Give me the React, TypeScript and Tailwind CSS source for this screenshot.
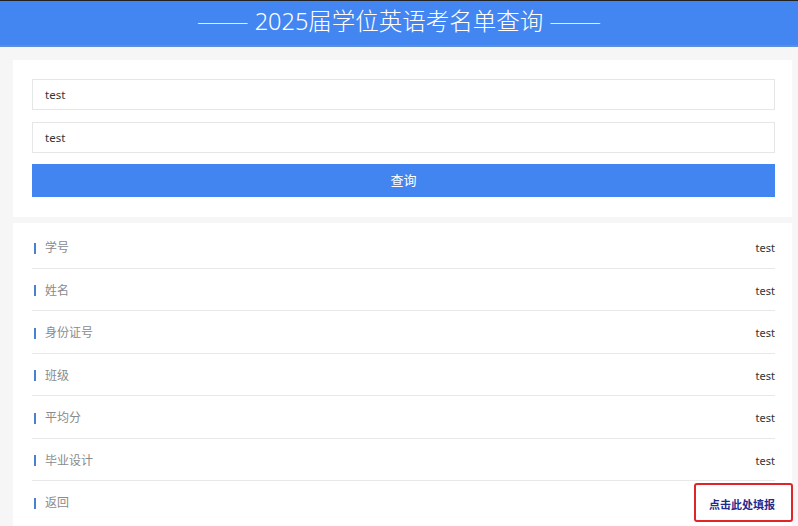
import React from "react";

const rows = [
  { label: "学号", value: "test" },
  { label: "姓名", value: "test" },
  { label: "身份证号", value: "test" },
  { label: "班级", value: "test" },
  { label: "平均分", value: "test" },
  { label: "毕业设计", value: "test" },
];

const font = { fontFamily: '"Noto Sans", "Noto Sans CJK SC", sans-serif' };

export default function App() {
  return (
    <div className="min-h-[526px] w-[798px] bg-[#f6f6f6] overflow-hidden" style={font}>
      {/* header */}
      <div className="border-t border-[#222] bg-[#4386f2] h-[47px] border-b-2 border-b-[#5d8fd8] flex items-center justify-center pb-[3px]">
        <h1 className="text-white text-[23.5px] font-light leading-none whitespace-nowrap">
          <span className="inline-block ml-[12px] origin-right scale-x-[1.35] font-['Noto_Sans_CJK_SC'] font-thin">——</span> 2025届学位英语考名单查询{" "}
          <span className="inline-block mr-[12px] origin-left scale-x-[1.35] font-['Noto_Sans_CJK_SC'] font-thin">——</span>
        </h1>
      </div>

      {/* search card */}
      <div className="mt-[13px] ml-[13px] mr-[6px] bg-white pl-[19px] pr-[17px] pt-[19px] pb-[20px]">
        <div className="h-[31px] border border-[#e6e6e6] flex items-center pl-[12px] text-[11.5px] text-[#333]">test</div>
        <div className="mt-[12px] h-[31px] border border-[#e6e6e6] flex items-center pl-[12px] text-[11.5px] text-[#333]">test</div>
        <button className="mt-[11px] w-full h-[33px] bg-[#4285f0] text-white text-[13px] flex items-center justify-center">查询</button>
      </div>

      {/* result card */}
      <div className="mt-[6px] ml-[13px] mr-[6px] bg-white pl-[19px] pr-[17px] pt-[3px] pb-[3px]">
        {rows.map((r) => (
          <div key={r.label} className="h-[42.5px] border-b border-[#e8e8e8] flex items-center justify-between pt-[3px]">
            <div className="flex items-center">
              <span className="ml-[2px] w-[2px] h-[11px] bg-[#4a80d2]" />
              <span className="ml-[9px] text-[12px] text-[#8a8a8a]">{r.label}</span>
            </div>
            <span className="text-[11px] text-[#333]">{r.value}</span>
          </div>
        ))}
        <div className="h-[42px] flex items-center justify-between pt-[2px]">
          <div className="flex items-center">
            <span className="ml-[2px] w-[2px] h-[11px] bg-[#4a80d2]" />
            <span className="ml-[9px] text-[12px] text-[#8a8a8a]">返回</span>
          </div>
          <div className="relative leading-none">
            <a className="text-[11px] font-bold text-[#1f2a8c] leading-none">点击此处填报</a>
            <span className="absolute left-[-15px] right-[-18px] top-[-12px] bottom-[-11px] border-2 border-[#e0252a] rounded-[3px]" />
          </div>
        </div>
      </div>
    </div>
  );
}
